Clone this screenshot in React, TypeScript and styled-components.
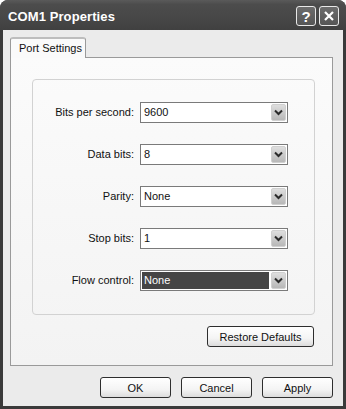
import React from "react";
import styled, { createGlobalStyle } from "styled-components";

const GlobalStyle = createGlobalStyle`
  html, body {
    margin: 0;
    padding: 0;
    background: #ffffff;
  }
  body {
    font-family: "Liberation Sans", Arial, sans-serif;
  }
`;

///////////////////////
// CSS
///////////////////////
const Window = styled.div`
  width: 346px;
  height: 409px;
  box-sizing: border-box;
  display: flex;
  flex-direction: column;
  background: #3a3a3a;
  border-radius: 8px 8px 0 0;
  overflow: hidden;
`;

const TitleBar = styled.div`
  height: 30px;
  flex-shrink: 0;
  display: flex;
  align-items: center;
  justify-content: space-between;
  padding: 0 7px 0 8px;
  background: linear-gradient(#5a5a5a 0%, #4c4c4c 15%, #474747 60%, #404040 100%);
  box-sizing: border-box;
`;

const Title = styled.div`
  color: #ffffff;
  font-weight: bold;
  font-size: 13px;
  letter-spacing: 0.1px;
  padding-top: 2px;
`;

const TitleButtons = styled.div`
  display: flex;
  gap: 3px;
  padding-top: 2px;
`;

const TitleButton = styled.div`
  width: 20px;
  height: 20px;
  box-sizing: border-box;
  border: 1px solid #e8e8e8;
  border-radius: 3px;
  background: linear-gradient(#6c6c6c, #555555);
  color: #ffffff;
  font-weight: bold;
  font-size: 15px;
  display: flex;
  align-items: center;
  justify-content: center;
`;

const Body = styled.div`
  flex: 1;
  margin: 0 3px 3px 3px;
  background: #ebebeb;
  padding: 7px 10px 0 7px;
  display: flex;
  flex-direction: column;
`;

const TabStrip = styled.div`
  display: flex;
  height: 20px;
`;

const Tab = styled.div`
  width: 76px;
  height: 21px;
  box-sizing: border-box;
  border: 1px solid #9a9a9a;
  border-bottom: none;
  border-radius: 3px 3px 0 0;
  border-top: 2px solid #bdbdbd;
  background: #fafafa;
  font-size: 11px;
  color: #111;
  padding: 3px 0 0 8px;
  position: relative;
  z-index: 1;
`;

const TabPanel = styled.div`
  height: 309px;
  box-sizing: border-box;
  border: 1px solid #9a9a9a;
  background: linear-gradient(#fbfbfb, #f3f3f3);
  padding: 21px 17px 0 21px;
  display: flex;
  flex-direction: column;
`;

const GroupBox = styled.div`
  height: 236px;
  box-sizing: border-box;
  border: 1px solid #d2d2d2;
  border-radius: 4px;
  display: grid;
  grid-template-columns: 101px 148px;
  grid-auto-rows: 21px;
  row-gap: 21px;
  column-gap: 6px;
  padding-top: 22px;
`;

const Label = styled.div`
  font-size: 11px;
  color: #111;
  text-align: right;
  line-height: 21px;
`;

const Combo = styled.div`
  box-sizing: border-box;
  border: 1px solid #7a7a7a;
  background: #ffffff;
  display: flex;
  align-items: stretch;
  padding: 1px;
`;

const ComboValue = styled.div<{ $selected?: boolean }>`
  flex: 1;
  font-size: 11px;
  line-height: 17px;
  padding-left: 2px;
  margin-right: 2px;
  background: ${(p) => (p.$selected ? "#454545" : "transparent")};
  color: ${(p) => (p.$selected ? "#ffffff" : "#111")};
`;

const DropButton = styled.div`
  width: 15px;
  box-sizing: border-box;
  border: 1px solid #d0d0d0;
  border-radius: 2px;
  background: linear-gradient(#dedede, #b8b8b8);
  display: flex;
  align-items: center;
  justify-content: center;
`;

const RestoreRow = styled.div`
  display: flex;
  justify-content: flex-end;
  margin-top: 11px;
  padding-right: 1px;
`;

const Button = styled.div<{ $width: number }>`
  width: ${(p) => p.$width}px;
  height: 21px;
  box-sizing: border-box;
  border: 1px solid #2e2e2e;
  border-radius: 3px;
  background: linear-gradient(#ffffff 0%, #f4f4f4 60%, #dcdcdc 100%);
  font-size: 11px;
  color: #111;
  display: flex;
  align-items: center;
  justify-content: center;
`;

const ButtonRow = styled.div`
  display: flex;
  justify-content: flex-end;
  gap: 10px;
  margin-top: 11px;
  padding-right: 0;
`;
///////////////////////
// CSS ここまで
///////////////////////

const Chevron = () => (
  <svg width="9" height="7" viewBox="0 0 9 7">
    <path d="M1 1.5 L4.5 5 L8 1.5" stroke="#2a2a2a" strokeWidth="2" fill="none" />
  </svg>
);

const rows = [
  { label: "Bits per second:", value: "9600" },
  { label: "Data bits:", value: "8" },
  { label: "Parity:", value: "None" },
  { label: "Stop bits:", value: "1" },
  { label: "Flow control:", value: "None", selected: true },
];

const App = () => {
  return (
    <>
      <GlobalStyle />
      <Window>
        <TitleBar>
          <Title>COM1 Properties</Title>
          <TitleButtons>
            <TitleButton>?</TitleButton>
            <TitleButton>
              <svg width="12" height="12" viewBox="0 0 12 12">
                <path d="M2 2 L10 10 M10 2 L2 10" stroke="#ffffff" strokeWidth="2.2" />
              </svg>
            </TitleButton>
          </TitleButtons>
        </TitleBar>
        <Body>
          <TabStrip>
            <Tab>Port Settings</Tab>
          </TabStrip>
          <TabPanel>
            <GroupBox>
              {rows.map((r) => (
                <React.Fragment key={r.label}>
                  <Label>{r.label}</Label>
                  <Combo>
                    <ComboValue $selected={r.selected}>{r.value}</ComboValue>
                    <DropButton>
                      <Chevron />
                    </DropButton>
                  </Combo>
                </React.Fragment>
              ))}
            </GroupBox>
            <RestoreRow>
              <Button $width={107}>Restore Defaults</Button>
            </RestoreRow>
          </TabPanel>
          <ButtonRow>
            <Button $width={71}>OK</Button>
            <Button $width={71}>Cancel</Button>
            <Button $width={71}>Apply</Button>
          </ButtonRow>
        </Body>
      </Window>
    </>
  );
};

export default App;
